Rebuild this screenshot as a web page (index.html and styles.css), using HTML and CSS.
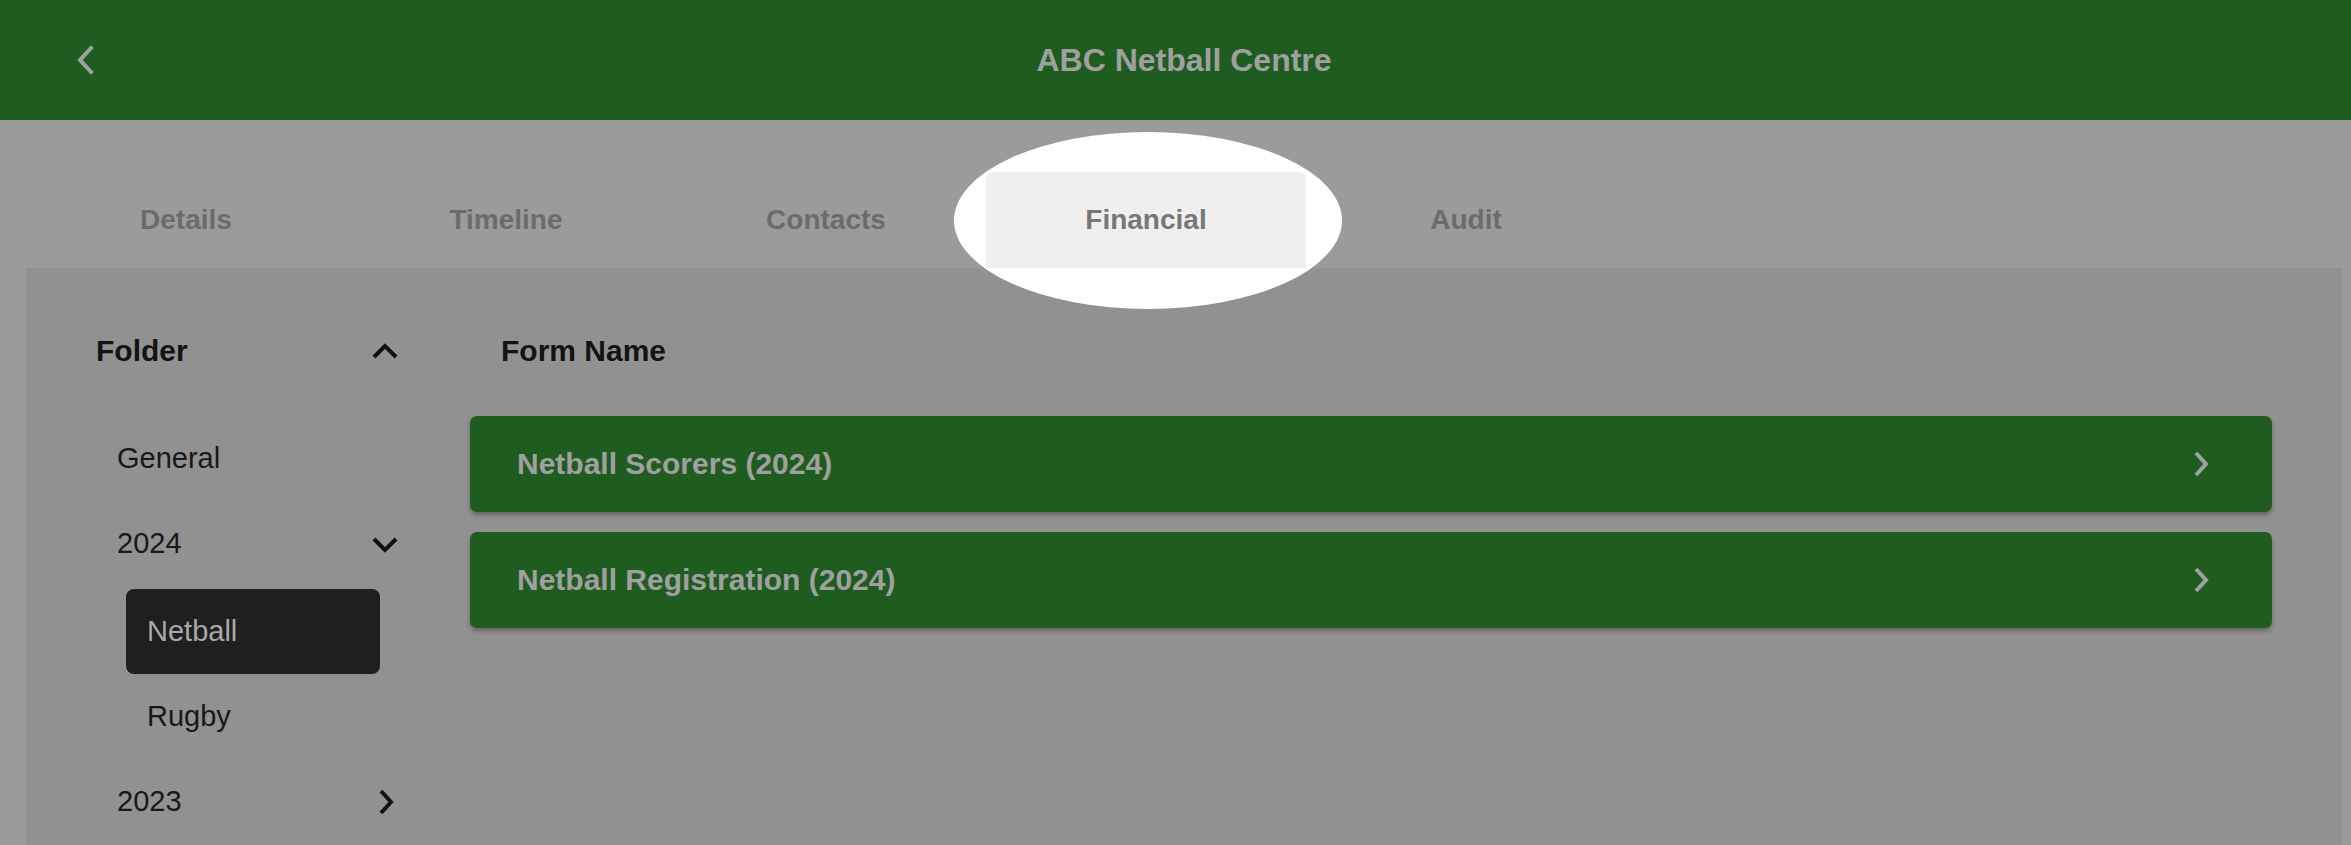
FILE: index.html
```html
<!DOCTYPE html>
<html lang="en">
<head>
<meta charset="utf-8">
<title>ABC Netball Centre</title>
<link rel="stylesheet" href="styles.css">
</head>
<body>
<header class="topbar">
  <button class="back" aria-label="Back">
    <svg width="20" height="30" viewBox="0 0 20 30"><polyline points="16,3 5,15 16,27" fill="none" stroke="#a0a0a0" stroke-width="4" stroke-linecap="square"/></svg>
  </button>
  <h1 class="title">ABC Netball Centre</h1>
  <span></span>
</header>
<nav class="tabs">
  <div class="tab">Details</div>
  <div class="tab">Timeline</div>
  <div class="tab">Contacts</div>
  <div class="tab active">Financial</div>
  <div class="tab">Audit</div>
  <div class="spotlight"></div>
</nav>
<section class="panel">
  <aside class="sidebar">
    <div class="folder-head">
      <span>Folder</span>
      <svg class="ico" width="26" height="26" viewBox="0 0 26 26"><polyline points="2,19 13,8 24,19" fill="none" stroke="#111" stroke-width="4"/></svg>
    </div>
    <div class="tree-row">General</div>
    <div class="tree-row">
      <span>2024</span>
      <svg class="ico" width="26" height="26" viewBox="0 0 26 26"><polyline points="2,8 13,19 24,8" fill="none" stroke="#111" stroke-width="4"/></svg>
    </div>
    <div class="subtree">
      <div class="sub-item selected">Netball</div>
      <div class="sub-item">Rugby</div>
    </div>
    <div class="tree-row">
      <span>2023</span>
      <svg class="ico" width="26" height="26" viewBox="0 0 26 26"><polyline points="9,2 19,13 9,24" fill="none" stroke="#111" stroke-width="4"/></svg>
    </div>
  </aside>
  <main class="forms">
    <div class="forms-head">Form Name</div>
    <div class="form-row">
      <span>Netball Scorers (2024)</span>
      <svg width="26" height="26" viewBox="0 0 26 26"><polyline points="9,2 19,13 9,24" fill="none" stroke="#a0a0a0" stroke-width="4"/></svg>
    </div>
    <div class="form-row">
      <span>Netball Registration (2024)</span>
      <svg width="26" height="26" viewBox="0 0 26 26"><polyline points="9,2 19,13 9,24" fill="none" stroke="#a0a0a0" stroke-width="4"/></svg>
    </div>
  </main>
</section>
</body>
</html>
```

FILE: styles.css
```css
* { box-sizing: border-box; }

html, body {
  margin: 0;
  padding: 0;
}

body {
  background: #9b9b9b;
  font-family: "Liberation Sans", Arial, sans-serif;
  overflow: hidden;
  height: 845px;
}

.topbar {
  height: 120px;
  background: #1f5c1f;
  display: grid;
  grid-template-columns: 1fr auto 1fr;
  align-items: center;
  padding: 0 9px 0 26px;
}

.back {
  justify-self: start;
  margin-left: 49px;
  width: 20px;
  height: 30px;
  padding: 0;
  border: 0;
  background: none;
  display: flex;
}

.title {
  margin: 0;
  font-size: 32px;
  font-weight: 700;
  color: #a0a0a0;
}

.tabs {
  position: relative;
  height: 148px;
  display: flex;
  align-items: flex-end;
  padding: 0 9px 0 26px;
}

.tab {
  width: 320px;
  height: 96px;
  display: flex;
  align-items: center;
  justify-content: center;
  font-size: 28px;
  font-weight: 700;
  color: #6b6b6b;
}

.tab.active {
  position: relative;
  z-index: 2;
  background: #efefef;
  color: #777777;
  border-radius: 8px 8px 0 0;
}

.spotlight {
  position: absolute;
  left: 954px;
  top: 12px;
  width: 388px;
  height: 177px;
  border-radius: 50%;
  background: #ffffff;
  z-index: 1;
}

.panel {
  margin: 0 9px 0 26px;
  background: #919191;
  display: flex;
  padding: 40px 70px 0;
  height: 600px;
}

.sidebar {
  width: 302px;
  flex: none;
}

.folder-head {
  height: 86px;
  display: flex;
  align-items: center;
  justify-content: space-between;
  font-size: 30px;
  font-weight: 700;
  color: #131313;
  margin-bottom: 22px;
}

.tree-row {
  height: 85px;
  display: flex;
  align-items: center;
  justify-content: space-between;
  padding-left: 21px;
  font-size: 29px;
  color: #181818;
}

.subtree {
  display: flex;
  flex-direction: column;
  padding-top: 3px;
}

.sub-item {
  margin-left: 30px;
  width: 254px;
  height: 85px;
  padding-left: 21px;
  display: flex;
  align-items: center;
  font-size: 29px;
  color: #181818;
  border-radius: 8px;
}

.sub-item.selected {
  background: #1f1f1f;
  color: #a9a9a9;
}

.ico {
  flex: none;
}

.forms {
  flex: 1;
  margin-left: 72px;
}

.forms-head {
  height: 86px;
  display: flex;
  align-items: center;
  padding-left: 31px;
  font-size: 30px;
  font-weight: 700;
  color: #131313;
  margin-bottom: 22px;
}

.form-row {
  height: 96px;
  background: #1f5c1f;
  border-radius: 7px;
  display: flex;
  align-items: center;
  justify-content: space-between;
  padding: 0 59px 0 47px;
  font-size: 30px;
  font-weight: 700;
  color: #a0a0a0;
  box-shadow: 0 3px 4px rgba(0, 0, 0, 0.3);
  margin-bottom: 20px;
}
```
